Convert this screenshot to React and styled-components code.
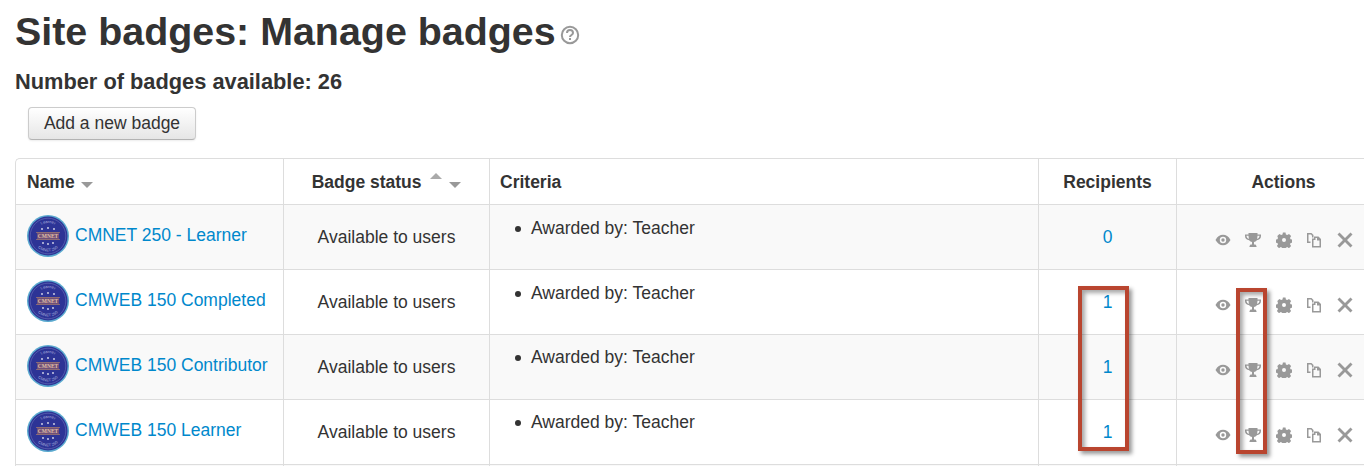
import React from 'react';
import styled, { createGlobalStyle } from 'styled-components';

const GlobalStyle = createGlobalStyle`
    html, body {
        margin: 0;
        padding: 0;
        background: #fff;
        overflow: hidden;
    }
    body {
        font-family: "Liberation Sans", Arial, sans-serif;
        color: #333;
    }
`;

const Page = styled.div`
    position: relative;
    width: 1364px;
    height: 466px;
    overflow: hidden;
    padding: 8px 0 0 15px;
    box-sizing: border-box;
`;

const Heading = styled.h2`
    display: flex;
    align-items: center;
    margin: 0;
    height: 46px;
    font-size: 39.4px;
    line-height: 46px;
    font-weight: bold;
    color: #333;
    svg {
        margin: 7px 0 0 4px;
    }
`;

const Count = styled.h3`
    margin: 16px 0 0;
    height: 24px;
    font-size: 21.8px;
    line-height: 24px;
    font-weight: bold;
    color: #333;
`;

const AddButton = styled.button`
    display: block;
    margin: 13px 0 0 13px;
    width: 168px;
    height: 33px;
    padding: 0;
    font-family: inherit;
    font-size: 17.5px;
    color: #333;
    background: linear-gradient(to bottom, #fff, #e6e6e6);
    border: 1px solid #ccc;
    border-bottom-color: #b3b3b3;
    border-radius: 4px;
    box-shadow: 0 1px 2px rgba(0, 0, 0, 0.08);
`;

const Table = styled.table`
    margin-top: 18px;
    width: 1376px;
    table-layout: fixed;
    border-collapse: separate;
    border-spacing: 0;
    border-top: 1px solid #ddd;
    border-left: 1px solid #ddd;
    border-top-left-radius: 5px;
    font-size: 17.5px;
    color: #333;
`;

const Th = styled.th`
    height: 45px;
    padding: 2px ${p => (p.$left ? '10px' : '0')} 0 ${p => (p.$left ? `${p.$left}px` : '0')};
    box-sizing: border-box;
    border-right: 1px solid #ddd;
    text-align: ${p => (p.$left ? 'left' : 'center')};
    font-weight: bold;
    vertical-align: middle;
`;

const Td = styled.td`
    height: 65px;
    padding: 0;
    box-sizing: border-box;
    border-top: 1px solid #ddd;
    border-right: 1px solid #ddd;
    background: ${p => (p.$odd ? '#f9f9f9' : '#fff')};
    text-align: ${p => (p.$left ? 'left' : 'center')};
    vertical-align: middle;
`;

const SortArrow = styled.span`
    display: inline-block;
    width: 0;
    height: 0;
    margin-left: ${p => (p.$up ? '4px' : '7px')};
    border-left: 6.5px solid transparent;
    border-right: 6.5px solid transparent;
    ${p => (p.$up
        ? 'border-bottom: 6px solid #aaa; position: relative; top: -9px;'
        : 'border-top: 6px solid #999; position: relative; top: 0;')}
`;

const NameArrow = styled(SortArrow)`
    margin-left: 1px;
`;

const BadgeLink = styled.a`
    display: flex;
    align-items: center;
    gap: 6px;
    padding: 0 0 3px 11px;
    color: #08c;
    text-decoration: none;
`;

const CountLink = styled.a`
    color: #08c;
    text-decoration: none;
`;

const CriteriaList = styled.ul`
    margin: 0;
    padding: ${p => p.$top}px 0 0 25px;
    height: 52px;
    line-height: 20px;
    box-sizing: border-box;
    list-style: none;
`;

const CriteriaItem = styled.li`
    display: flex;
    align-items: center;
    gap: 10px;
    &::before {
        content: '';
        width: 6px;
        height: 6px;
        margin-top: 2px;
        border-radius: 50%;
        background: #333;
    }
`;

const Actions = styled.div`
    display: flex;
    justify-content: center;
    align-items: center;
    gap: 14.5px;
    padding-top: 5px;
    svg {
        display: block;
        fill: #999;
    }
`;

// red annotation boxes drawn over the screenshot
const Marker = styled.div`
    position: absolute;
    box-sizing: border-box;
    left: ${p => p.$x}px;
    top: ${p => p.$y}px;
    width: ${p => p.$w}px;
    height: ${p => p.$h}px;
    border: 4px solid #b9452f;
    box-shadow: 3px 3px 4px rgba(0, 0, 0, 0.4), inset 3px 3px 4px rgba(0, 0, 0, 0.35);
`;

const HelpIcon = () => (
    <svg width="20" height="20" viewBox="0 0 20 20">
        <circle cx="10" cy="10" r="8.2" fill="none" stroke="#999" strokeWidth="2" />
        <path d="M7 8a3 3 0 0 1 6 0c0 2-3 2-3 4" fill="none" stroke="#999" strokeWidth="2" />
        <rect x="9" y="13" width="2" height="2" fill="#999" />
    </svg>
);

const BadgeImage = () => (
    <svg width="42" height="42" viewBox="0 0 42 42">
        <defs>
            <path id="badgeTop" d="M8 21a13 13 0 0 1 26 0" />
            <path id="badgeBottom" d="M5.500 21a15.500 15.500 0 0 0 31 0" />
        </defs>
        <circle cx="21" cy="21" r="21" fill="#5aa9cf" />
        <circle cx="21" cy="21" r="19.5" fill="#2d3496" />
        <circle cx="21" cy="21" r="17.8" fill="none" stroke="#6a70b8" strokeWidth="0.6" />
        <text fontSize="4" fontFamily="Liberation Sans, sans-serif" fill="#aab0dc" textAnchor="middle">
            <textPath href="#badgeTop" startOffset="50%">Learner</textPath>
        </text>
        <text fontSize="4" fontFamily="Liberation Sans, sans-serif" fill="#aab0dc" textAnchor="middle">
            <textPath href="#badgeBottom" startOffset="50%">CMNET 250</textPath>
        </text>
        <rect x="10" y="17.500" width="22" height="7" fill="#6f4f78" />
        <path d="M9 17.500h24M9 24.500h24" stroke="#b98a6a" strokeWidth="0.6" />
        <text x="21" y="23" textAnchor="middle" fontSize="5.500" fontWeight="bold" fontFamily="Liberation Serif, serif" fill="#e0c0a8">CMNET</text>
        <circle cx="15" cy="14" r="0.9" fill="#dde" />
        <circle cx="21" cy="13" r="0.9" fill="#dde" />
        <circle cx="27" cy="14" r="0.9" fill="#dde" />
        <circle cx="16" cy="28" r="0.9" fill="#dde" />
        <circle cx="21" cy="29" r="0.9" fill="#dde" />
        <circle cx="26" cy="28" r="0.9" fill="#dde" />
    </svg>
);

const EyeIcon = () => (
    <svg width="16" height="16" viewBox="0 0 16 16">
        <path fillRule="evenodd" d="M0.500 8C2.500 4.300 5 2.800 8 2.800s5.500 1.500 7.500 5.200c-2 3.700-4.500 5.200-7.500 5.200S2.500 11.700 0.500 8zM8 4.800a3.200 3.200 0 1 0 0 6.400 3.200 3.200 0 0 0 0-6.400zM8 6.300a1.700 1.700 0 1 1 0 3.400 1.700 1.700 0 0 1 0-3.400z" />
    </svg>
);

const TrophyIcon = () => (
    <svg width="16" height="16" viewBox="0 0 16 16">
        <path fillRule="evenodd" d="M3.500 1h9v1.500H16V4c0 2.500-1.800 4-4.200 4.300C11 9.300 10 9.800 9 10v2.500h1.500l1 1.500v1h-7v-1l1-1.500H7V10c-1-.2-2-.7-2.800-1.700C1.800 8 0 6.500 0 4V2.500h3.500V1zM1.500 3.700C1.500 5.300 2.500 6.400 4 6.800 3.700 5.800 3.500 4.800 3.500 3.700h-2zM14.500 3.700h-2c0 1.100-.2 2.100-.5 3.100 1.500-.4 2.500-1.500 2.500-3.100z" />
    </svg>
);

const GearIcon = () => (
    <svg width="16" height="16" viewBox="0 0 16 16">
        <path fillRule="evenodd" d="M6.500 0.500h3l.4 2 1.300.6 1.800-1.100 2.100 2.100-1.100 1.800.6 1.300 2 .4v3l-2 .4-.6 1.300 1.100 1.800-2.100 2.100-1.800-1.100-1.300.6-.4 2h-3l-.4-2-1.300-.6-1.800 1.100-2.100-2.100 1.100-1.800-.6-1.300-2-.4v-3l2-.4.6-1.300L1.300 4.100l2.100-2.100 1.800 1.100 1.300-.6.400-2zM8 6a2 2 0 1 0 0 4 2 2 0 0 0 0-4z" />
    </svg>
);

const CopyIcon = () => (
    <svg width="16" height="16" viewBox="0 0 16 16">
        <path fillRule="evenodd" d="M1 1h4.500L7.500 3v2.500H6V3.800L5 2.500H2.500v7H4.500V11H1V1zM8 4.500h4.500L15 7v8.500H6V6.500h2v-2zM7.500 8v6h6V8.500H11V6H9.500v2h-2z" />
    </svg>
);

const CloseIcon = () => (
    <svg width="16" height="16" viewBox="0 0 16 16">
        <path d="M2.500 .5 8 6 13.500 .5 15.500 2.500 10 8l5.500 5.500-2 2L8 10l-5.500 5.500-2-2L6 8 .5 2.500z" />
    </svg>
);

const rows = [
    { name: 'CMNET 250 - Learner', count: 0, criteriaTop: 7 },
    { name: 'CMWEB 150 Completed', count: 1, criteriaTop: 7 },
    { name: 'CMWEB 150 Contributor', count: 1, criteriaTop: 6 },
    { name: 'CMWEB 150 Learner', count: 1, criteriaTop: 6 },
];

function App() {
    return (
        <Page>
            <GlobalStyle />
            <Heading>Site badges: Manage badges<HelpIcon /></Heading>
            <Count>Number of badges available: 26</Count>
            <AddButton>Add a new badge</AddButton>
            <Table>
                <colgroup>
                    <col style={{ width: 268 }} />
                    <col style={{ width: 206 }} />
                    <col style={{ width: 549 }} />
                    <col style={{ width: 138 }} />
                    <col />
                </colgroup>
                <thead>
                    <tr>
                        <Th $left={11}>Name <NameArrow /></Th>
                        <Th>Badge status <SortArrow $up /><SortArrow /></Th>
                        <Th $left={10}>Criteria</Th>
                        <Th>Recipients</Th>
                        <Th>Actions</Th>
                    </tr>
                </thead>
                <tbody>
                    {rows.map((row, i) => (
                        <tr key={row.name}>
                            <Td $left $odd={i % 2 === 0}>
                                <BadgeLink href="#"><BadgeImage />{row.name}</BadgeLink>
                            </Td>
                            <Td $odd={i % 2 === 0}>Available to users</Td>
                            <Td $left $odd={i % 2 === 0}>
                                <CriteriaList $top={row.criteriaTop}><CriteriaItem>Awarded by: Teacher</CriteriaItem></CriteriaList>
                            </Td>
                            <Td $odd={i % 2 === 0}><CountLink href="#">{row.count}</CountLink></Td>
                            <Td $odd={i % 2 === 0}>
                                <Actions>
                                    <EyeIcon /><TrophyIcon /><GearIcon /><CopyIcon /><CloseIcon />
                                </Actions>
                            </Td>
                        </tr>
                    ))}
                    {/* next row is cut off by the bottom of the screenshot */}
                    <tr>
                        <Td $odd />
                        <Td $odd />
                        <Td $odd />
                        <Td $odd />
                        <Td $odd />
                    </tr>
                </tbody>
            </Table>
            <Marker $x={1078} $y={286} $w={51} $h={165} />
            <Marker $x={1236} $y={288} $w={31} $h={166} />
        </Page>
    );
}

export default App;
